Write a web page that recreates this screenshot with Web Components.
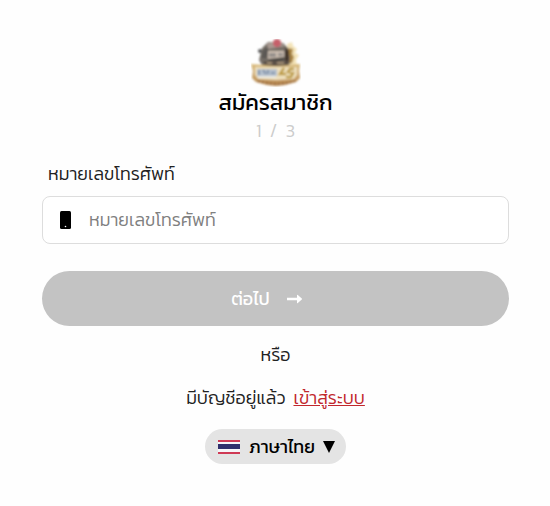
<!DOCTYPE html>
<html lang="th">

<head>
    <meta charset="UTF-8">
    <meta name="viewport" content="width=device-width, initial-scale=1.0">
    <title>สมัครสมาชิก</title>
    <style>
        body {
            margin: 0;
            background: #fefefe;
            color: #222;
            font-family: Kanit, Prompt, "Noto Sans Thai", "Noto Sans", sans-serif;
            font-size: 18px;
            font-weight: 300;
            line-height: 24px;
        }
    </style>
</head>

<body>
    <signup-card>
        <brand-logo slot="logo"></brand-logo>
        <span slot="title">สมัครสมาชิก</span>
        <span slot="step">1  /  3</span>
        <phone-field label="หมายเลขโทรศัพท์"></phone-field>
        <next-button>ต่อไป</next-button>
        <login-hint slot="footer" href="#login" link="เข้าสู่ระบบ">มีบัญชีอยู่แล้ว</login-hint>
        <lang-select slot="footer"></lang-select>
    </signup-card>

    <script>
        // attach an open shadow root with the given markup
        function render(el, html) {
            const root = el.attachShadow({ mode: "open" });
            root.innerHTML = html;
            return root;
        }

        // page layout: header, form, footer
        class SignupCard extends HTMLElement {
            constructor() {
                super();
                render(this, `
                    <style>
                        :host { display: block; padding: 39px 41px 40px 42px; }
                        header { display: flex; flex-direction: column; align-items: center; }
                        h1 { margin: 0; font-size: 22px; line-height: 32px; font-weight: 400; color: #000; }
                        p { margin: 0; color: #ccc; white-space: pre; }
                        form { margin-top: 19px; display: flex; flex-direction: column; gap: 27px; }
                        footer { margin-top: 17px; display: flex; flex-direction: column; align-items: center; gap: 19px; }
                    </style>
                    <header>
                        <slot name="logo"></slot>
                        <h1><slot name="title"></slot></h1>
                        <p><slot name="step"></slot></p>
                    </header>
                    <form><slot></slot></form>
                    <footer>
                        <span>หรือ</span>
                        <slot name="footer"></slot>
                    </footer>
                `);
            }
        }

        // slot machine on a golden sign
        class BrandLogo extends HTMLElement {
            constructor() {
                super();
                render(this, `
                    <style>
                        :host { display: block; height: 48px; }
                        svg { display: block; }
                    </style>
                    <svg width="50" height="48" viewBox="0 0 50 48" role="img" aria-label="logo">
                        <defs>
                            <filter id="soft" x="-10%" y="-10%" width="120%" height="120%"><feGaussianBlur stdDeviation=".8"/></filter>
                            <linearGradient id="gold" x1="0" y1="0" x2="0" y2="1">
                                <stop offset="0" stop-color="#d9bb7b"/><stop offset="1" stop-color="#b98952"/>
                            </linearGradient>
                        </defs>
                        <g filter="url(#soft)">
                            <path d="M36 5l5-2 1 4 4 3-2 4 4 2-3 5 1 5-8 1z" fill="#f3e3b8"/>
                            <path d="M37 9l5 1-1 5 2 3-2 6-4 1z" fill="#a8833f"/>
                            <path d="M11 9l6-6 15 1 5 5 2 10-1 9H12l-4-7z" fill="#777068"/>
                            <path d="M16 4l12-1 6 4-17 3z" fill="#a99991"/>
                            <path d="M12 11l4-3 2 4-3 8-5-1z" fill="#5b5854"/>
                            <path d="M17 12h16v8H17z" fill="#cfc0b2"/>
                            <path d="M18 14h7v4h-7zM27 14h5v3h-5z" fill="#95908b"/>
                            <path d="M17 20l16-2 1 3-16 2z" fill="#4a4642"/>
                            <path d="M34 8l4 4v12l-4 2z" fill="#42342a"/>
                            <path d="M12 22h26l-1 5H14z" fill="#5a5047"/>
                            <path d="M16 24h5M26 24h7" stroke="#a49076" stroke-width="2"/>
                            <circle cx="26" cy="4" r="4" fill="#c6606b"/>
                            <circle cx="9" cy="12" r="2" fill="#555"/>
                            <path d="M0 25l12 1 13 1 13-1 11-1-1 7 1 7-4 4-11 3-9 1-9-1-11-3-4-4 1-7z" fill="url(#gold)"/>
                            <path d="M4 28h42v8l-3 4-18 1-18-1-3-4z" fill="#eee0be"/>
                            <path d="M6 30h20v7H6z" fill="#b5c0cd"/>
                            <path d="M8 31v5M12 31l3 4M17 31v4M20 34h4" stroke="#7587a0" stroke-width="1.6"/>
                            <path d="M7 38h18" stroke="#e8edf1" stroke-width="1.4"/>
                            <path d="M33 29l-4 6h6M43 30h-4l-2 3 5 1-2 4h-5" fill="none" stroke="#bb9a41" stroke-width="2.4"/>
                            <path d="M7 42l10 2 9 1 10-1 8-2" fill="none" stroke="#8d5e3b" stroke-width="2" stroke-dasharray="2 2"/>
                        </g>
                    </svg>
                `);
            }
        }

        // label and boxed input with a phone icon
        class PhoneField extends HTMLElement {
            constructor() {
                super();
                const root = render(this, `
                    <style>
                        :host { display: block; }
                        label { display: block; margin: 0 6px 10px; }
                        .box {
                            display: flex;
                            align-items: center;
                            gap: 18px;
                            height: 48px;
                            box-sizing: border-box;
                            padding: 0 17px;
                            border: 1px solid #ddd;
                            border-radius: 8px;
                            background: #fff;
                        }
                        input {
                            flex: 1;
                            min-width: 0;
                            padding: 0;
                            border: 0;
                            outline: 0;
                            background: none;
                            color: inherit;
                            font: inherit;
                        }
                        input::placeholder { color: #808080; opacity: 1; }
                    </style>
                    <label for="phone"></label>
                    <div class="box">
                        <svg width="11" height="18" viewBox="0 0 11 18" aria-hidden="true">
                            <rect width="11" height="18" rx="1.5"/>
                            <circle cx="5.5" cy="15.5" r=".8" fill="#fff"/>
                        </svg>
                        <input id="phone" type="tel">
                    </div>
                `);
                const text = this.getAttribute("label");
                root.querySelector("label").textContent = text;
                root.querySelector("input").placeholder = text;
            }
        }

        class NextButton extends HTMLElement {
            constructor() {
                super();
                render(this, `
                    <style>
                        :host { display: block; }
                        button {
                            display: flex;
                            align-items: center;
                            justify-content: center;
                            width: 100%;
                            height: 55px;
                            padding: 0;
                            border: 0;
                            border-radius: 28px;
                            background: #c3c3c3;
                            color: #fff;
                            font: inherit;
                            font-weight: 400;
                        }
                        svg { margin: 0 17px; }
                    </style>
                    <button type="button">
                        <slot></slot>
                        <svg width="16" height="10" viewBox="0 0 16 10" aria-hidden="true">
                            <path d="M0 3.8h10V1.2q0-.9.8-.3l4 3.6q.5.5 0 1l-4 3.600q-.8.600-.8-.3V6.200H0z" fill="#fff"/>
                        </svg>
                    </button>
                `);
            }
        }

        class LoginHint extends HTMLElement {
            constructor() {
                super();
                const root = render(this, `
                    <style>
                        :host { display: flex; gap: 8px; }
                        a { color: #c1272d; }
                    </style>
                    <slot></slot>
                    <a></a>
                `);
                const a = root.querySelector("a");
                a.href = this.getAttribute("href");
                a.textContent = this.getAttribute("link");
            }
        }

        // flag + language drop-down
        class LangSelect extends HTMLElement {
            constructor() {
                super();
                render(this, `
                    <style>
                        :host {
                            display: flex;
                            align-items: center;
                            height: 35px;
                            box-sizing: border-box;
                            padding: 0 11px 0 13px;
                            border-radius: 18px;
                            background: #e4e4e4;
                        }
                        .flag { margin-right: 9px; }
                        select {
                            appearance: none;
                            margin: 0 8px 0 0;
                            padding: 0;
                            border: 0;
                            background: none;
                            color: #000;
                            font: inherit;
                            font-weight: 400;
                        }
                    </style>
                    <svg class="flag" width="22" height="14" viewBox="0 0 22 14" aria-hidden="true">
                        <path fill="#cf3a55" d="M0 0h22v14H0z"/>
                        <path fill="#f5f5f8" d="M0 2h22v10H0z"/>
                        <path fill="#302f6c" d="M0 4h22v5H0z"/>
                    </svg>
                    <select aria-label="ภาษา">
                        <option>ภาษาไทย</option>
                    </select>
                    <svg width="12" height="12" viewBox="0 0 12 12" aria-hidden="true">
                        <path d="M0 0h12L6 12z"/>
                    </svg>
                `);
            }
        }

        customElements.define("signup-card", SignupCard);
        customElements.define("brand-logo", BrandLogo);
        customElements.define("phone-field", PhoneField);
        customElements.define("next-button", NextButton);
        customElements.define("login-hint", LoginHint);
        customElements.define("lang-select", LangSelect);
    </script>
</body>

</html>
